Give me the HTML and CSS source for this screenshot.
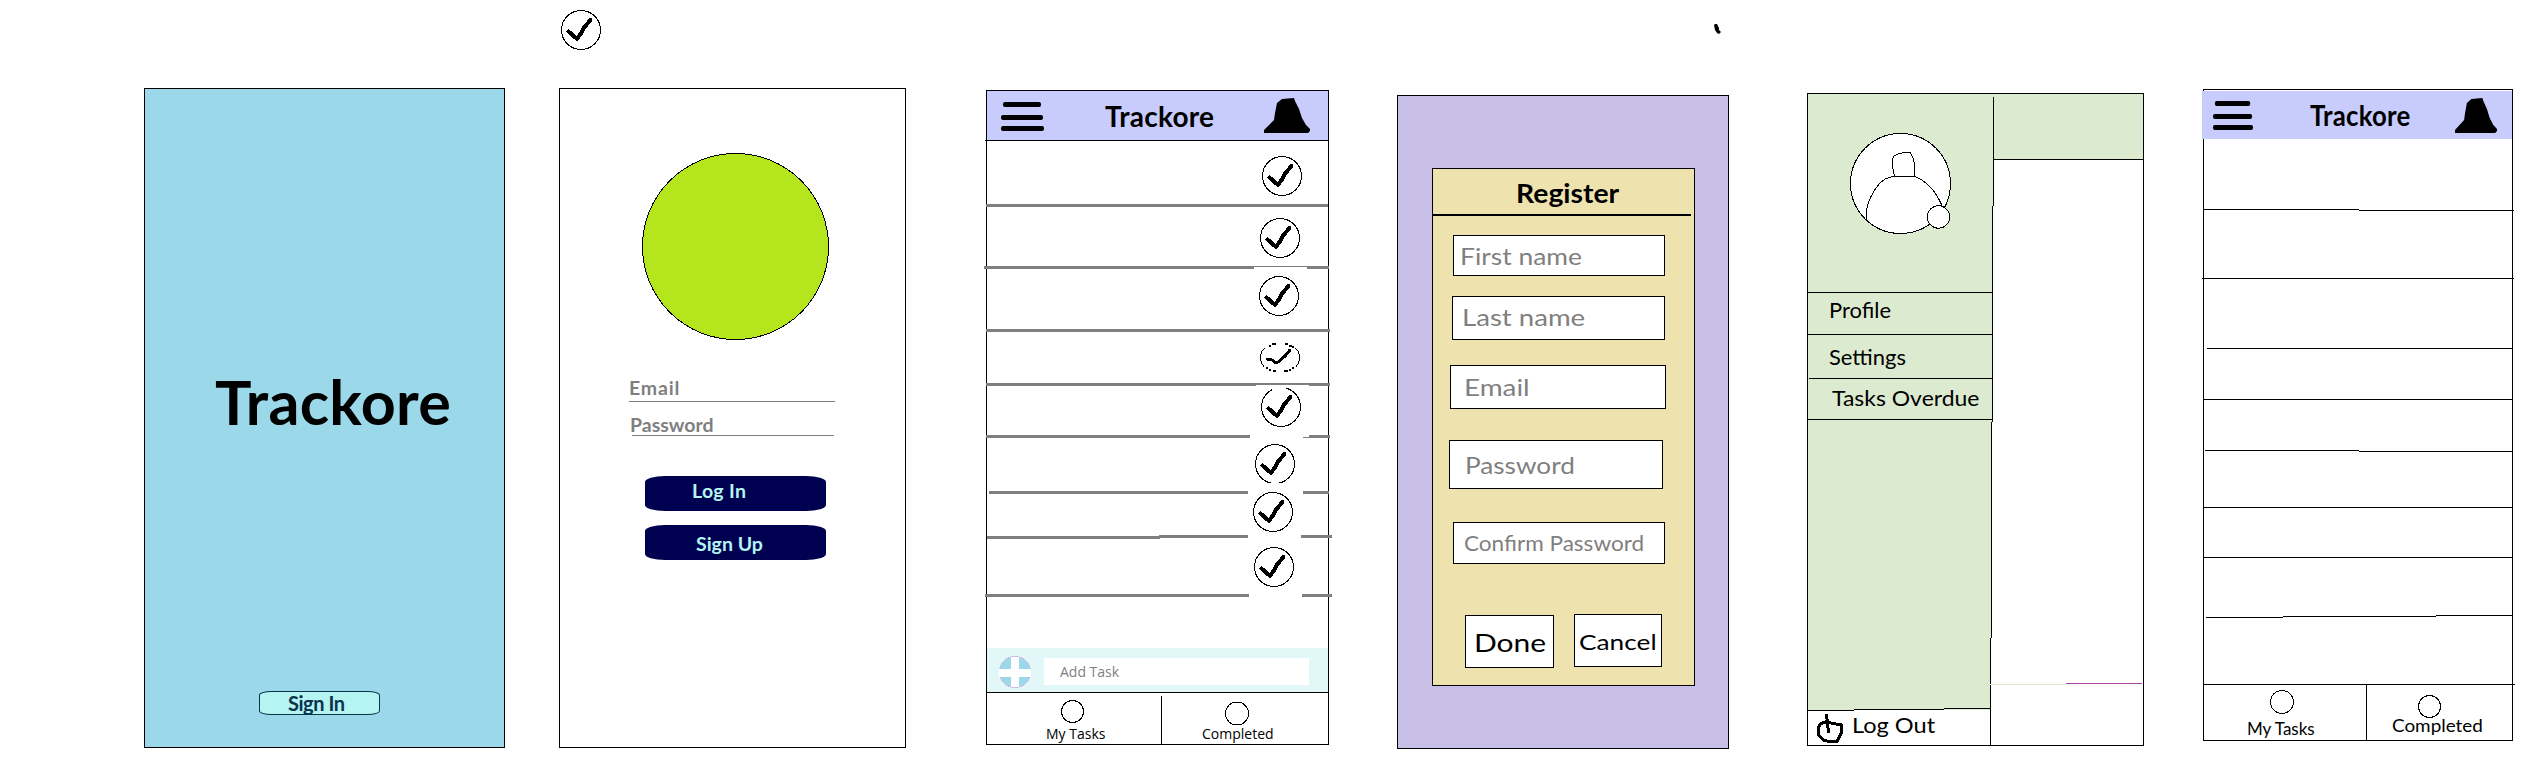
FILE: index.html
```
<!DOCTYPE html>
<html lang="en">
<head>
<meta charset="utf-8">
<title>Trackore wireframes</title>
<link rel="stylesheet" href="styles.css">
</head>
<body>
<svg class="defs" width="0" height="0">
  <symbol id="check" viewBox="0 0 40 40">
    <circle cx="20" cy="20" r="19.5" class="ring"/>
    <path d="M7.5 21.5 L16 29 L20.5 22.5 L22 19 L29.5 10" class="tick"/>
  </symbol>
  <symbol id="menu" viewBox="0 0 43 30" preserveAspectRatio="none">
    <rect x="2" y="0" width="38" height="5" rx="2"/>
    <rect x="0" y="13" width="42" height="5" rx="2"/>
    <rect x="0" y="24" width="43" height="5" rx="2"/>
  </symbol>
  <symbol id="bell" viewBox="0 0 46 35" preserveAspectRatio="none">
    <path d="M0 35 V32 L5 27 L10 22 L11 15 L13 5 L18 1 L30 0 L31 3 L35 11 L38 20 L42 27 L46 31 V33 L44 35 Z"/>
  </symbol>
</svg>
<main class="board">
  <svg class="note-check" width="40" height="40"><use href="#check"/></svg>
  <svg class="note-speck" width="8" height="12" viewBox="0 0 8 12"><path d="M0 1 L1 0 H3 L5 4 V6 L7 8 L5 10 L3 9 L1 6 Z"/></svg>

  <section class="screen splash">
    <h1 class="t splash-title">Trackore</h1>
    <button class="sign-in"><span class="t">Sign In</span></button>
  </section>

  <section class="screen login">
    <svg class="logo" width="187" height="187" viewBox="0 0 187 187"><circle cx="93.5" cy="93.5" r="93"/></svg>
    <div class="line-field email"><span class="t">Email</span></div>
    <div class="line-field password"><span class="t">Password</span></div>
    <button class="pill log-in"><span class="t">Log In</span></button>
    <button class="pill sign-up"><span class="t">Sign Up</span></button>
  </section>

  <section class="screen tasks">
    <header class="bar">
      <svg class="menu" width="43" height="30"><use href="#menu"/></svg>
      <span class="t brand">Trackore</span>
      <svg class="bell" width="46" height="35"><use href="#bell"/></svg>
    </header>
    <div class="row r1"><svg width="40" height="40"><use href="#check"/></svg></div>
    <div class="row r2"><svg width="40" height="40"><use href="#check"/></svg></div>
    <div class="row r3"><svg width="40" height="40"><use href="#check"/></svg></div>
    <div class="row r4"><svg width="40" height="29" viewBox="0 0 40 29"><path class="ring" d="M5 5 L2 8 L0.500 12 V17 L2 21 L4 23.500 M35 5 L38 8 L39.500 12 V17 L38 21 L36 23.500"/><path class="dash" d="M9 3h2 M12 1h4 M25 1h3 M29 2.500h3 M32 4h2 M6 25h2 M9 27h2 M13 28h3 M24 28h4 M29 26.500h2 M32 25h2"/><path d="M7 16 L12 17 L16 20 L19 18.500 L25 13 L30 7" class="tick thin"/></svg></div>
    <div class="row r5"><svg width="40" height="40"><use href="#check"/><rect x="11" y="0" width="14" height="6" class="gap"/></svg></div>
    <div class="row r6"><svg width="40" height="40"><use href="#check"/><rect x="16" y="38" width="8" height="2" class="gap"/></svg></div>
    <div class="row r7"><svg width="40" height="40"><use href="#check"/></svg></div>
    <div class="row r8"><svg width="40" height="40"><use href="#check"/></svg></div>
    <div class="add">
      <svg class="plus" width="32" height="32" viewBox="0 0 32 32"><circle cx="16" cy="16" r="15.5"/><path d="M16 1 V31 M0 17 H32"/></svg>
      <div class="add-input"><span class="t">Add Task</span></div>
    </div>
    <nav class="tabs">
      <div class="tab mine"><svg width="24" height="24"><circle cx="11.5" cy="11.5" r="11" class="ring"/></svg><span class="t">My Tasks</span></div>
      <div class="tab done"><svg width="24" height="24"><circle cx="12" cy="11.5" r="11.5" class="ring"/></svg><span class="t">Completed</span></div>
    </nav>
    <svg class="sketch" width="343" height="655" viewBox="986 90 343 655">
      <path class="thick" d="M986 205.5H1328 M984 267.5H1254 M1307 267.5H1329 M986 330.5H1330 M986 384.5H1256 M1309 384.5H1330 M986 436.5H1250 M1309 436.5H1330 M989 492.5H1248 M1303 492.5H1329 M987 537.5H1160 M1159 536.5H1248 M1301 536.5H1332 M985 595.5H1249 M1302 595.5H1332"/>
      <path class="gray" d="M1254 266.5H1307 M1256 383.5H1309 M1256 384.5H1309 M1303 437.5H1309"/>
      <path class="thin-line" d="M985 140.5H1328 M1161.5 696V744"/>
    </svg>
  </section>

  <section class="screen register">
    <form class="card">
      <h2><span class="t">Register</span></h2>
      <div class="input f1"><span class="t">First name</span></div>
      <div class="input f2"><span class="t">Last name</span></div>
      <div class="input f3"><span class="t">Email</span></div>
      <div class="input f4"><span class="t">Password</span></div>
      <div class="input f5"><span class="t">Confirm Password</span></div>
      <div class="actions">
        <div class="input ok"><span class="t">Done</span></div>
        <div class="input cancel"><span class="t">Cancel</span></div>
      </div>
    </form>
  </section>

  <section class="screen drawer">
    <aside class="side">
      <div class="profile">
        <svg width="101" height="101" viewBox="1850 133 101 101">
          <circle cx="1900.5" cy="183.5" r="50" class="ring"/>
          <path class="ring" d="M1866.5 219 V211 C1868 200 1876 184 1886 178.500 L1893 176.500 H1915 C1929 182 1937 193 1943 208"/>
          <path class="ring" d="M1894.500 176.500 L1892.500 167 V159 L1894 156 Q1899 153 1904 152.500 H1910.500 L1913 158 L1914.500 164 V176.500 Z"/>
          <circle cx="1938.500" cy="217" r="11.200" class="ring"/>
        </svg>
      </div>
      <div class="item i1"><span class="t">Profile</span></div>
      <div class="item i2"><span class="t">Settings</span></div>
      <div class="item i3"><span class="t">Tasks Overdue</span></div>
      <div class="logout">
        <svg width="28" height="30" viewBox="1816 714 28 30"><path d="M1826.500 714 L1828.500 733 M1827 721.500 L1821 723.500 L1818.500 727 V735 L1824 740.500 L1830 741.500 H1837 L1839.500 737 L1841.500 732 V725 L1836 724 L1829 722.500"/></svg>
        <span class="t">Log Out</span>
      </div>
    </aside>
    <div class="content"><div class="content-head"></div></div>
    <svg class="sketch" width="337" height="653" viewBox="1807 93 337 653">
      <path class="green" d="M1990 94h3v112h-3z M1990 206h2v216h-2z M1990 422h1v216h-1z"/>
      <path class="thin-line" d="M1993.500 97V206 M1992.500 206V422 M1991.500 422V638 M1990.500 638V745 M1808 292.500H1992 M1808 334.500H1992 M1809 378.500H1992 M1808 419.500H1992 M1994 159.500H2143 M1807 710.500H1854 M1854 709.500H1944 M1944 708.500H1990"/>
      <path class="faint" d="M1990 684.500H2066"/>
      <path class="violet" d="M2066 683.500H2142"/>
    </svg>
  </section>

  <section class="screen empty">
    <header class="bar">
      <svg class="menu" width="40" height="30"><use href="#menu"/></svg>
      <span class="t brand">Trackore</span>
      <svg class="bell" width="42" height="35"><use href="#bell"/></svg>
    </header>
    <div class="blank"></div>
    <nav class="tabs">
      <div class="tab mine"><svg width="24" height="24"><circle cx="12" cy="12" r="11.500" class="ring"/></svg><span class="t">My Tasks</span></div>
      <div class="tab done"><svg width="24" height="23"><circle cx="11.500" cy="11.500" r="11" class="ring"/></svg><span class="t">Completed</span></div>
    </nav>
    <svg class="sketch" width="310" height="652" viewBox="2203 89 310 652">
      <path class="thin-line" d="M2204 209.500H2359 M2359 210.500H2514 M2202 278.500H2514 M2207 348.500H2512 M2204 399.500H2512 M2205 450.500H2359 M2359 451.500H2512 M2204 507.500H2512 M2204 557.500H2512 M2206 617.500H2283 M2283 616.500H2436 M2436 615.500H2512 M2204 684.500H2515 M2366.500 684V740"/>
    </svg>
  </section>
</main>
</body>
</html>
```
FILE: styles.css
```
* { box-sizing: border-box; }
body { margin: 0; background: #fff; color: #000; font-family: Lato, "Liberation Sans", sans-serif; }
h1, h2 { margin: 0; font-weight: 700; }
button { font: inherit; padding: 0; text-align: left; display: block; }
svg { display: block; flex: none; }
.defs { position: absolute; }
.t { display: block; width: max-content; white-space: nowrap; transform-origin: 0 50%; }

.board { position: relative; display: flex; align-items: flex-start; width: 2528px; height: 780px; overflow: hidden; }
.note-check { position: absolute; left: 561px; top: 10px; }
.note-speck { position: absolute; left: 1714px; top: 24px; }

.screen { position: relative; flex: none; border: 1px solid #000; background: #fff; display: flex; flex-direction: column; align-items: flex-start; }
.sketch { position: absolute; left: -1px; top: -1px; overflow: visible; fill: none; shape-rendering: crispEdges; pointer-events: none; }
.thick { stroke: #7f7f7f; stroke-width: 3; }
.gray { stroke: #7f7f7f; }
.thin-line { stroke: #000; }
.green { fill: #dcead0; }
.faint { stroke: #dcead0; }
.violet { stroke: #a349a4; }
.ring { fill: #fff; stroke: #000; stroke-width: 1; shape-rendering: crispEdges; }
.tick { fill: none; stroke: #000; stroke-width: 4; stroke-linecap: round; stroke-linejoin: round; shape-rendering: crispEdges; }
.tick.thin { stroke-width: 3; }
.dash { fill: none; stroke: #000; stroke-width: 2; shape-rendering: crispEdges; }
.gap { fill: #fff; }

/* Splash */
.splash { width: 361px; height: 660px; margin: 88px 0 0 144px; background: #9bd9ea; }
.splash-title { margin: 276px 0 0 70px; font-size: 61px; line-height: 74px; letter-spacing: 0.3px; }
.sign-in { width: 121px; height: 24px; margin: 252px 0 0 114px; padding-left: 28px; border: 1px solid #0b3350; border-radius: 12px / 4px; background: #b4f4f1; color: #0b3350; font-size: 20px; font-weight: 700; line-height: 22px; letter-spacing: -0.45px; }

/* Login */
.login { width: 347px; height: 660px; margin: 88px 0 0 54px; }
.logo { margin: 64px 0 0 82px; fill: #b5e61d; stroke: #000; shape-rendering: crispEdges; }
.line-field { border-bottom: 1px solid #7f7f7f; color: #7f7f7f; font-size: 19.5px; font-weight: 700; line-height: 27px; }
.email { width: 206px; height: 28px; margin: 34px 0 0 69px; letter-spacing: 0.8px; }
.password { width: 202px; height: 25px; margin: 9px 0 0 72px; text-indent: -2px; }
.pill { width: 181px; height: 35px; border: 0; border-radius: 20px / 6px; background: #000050; color: #b4f4f1; font-size: 19.5px; font-weight: 700; display: flex; align-items: flex-start; }
.log-in { margin: 40px 0 0 85px; padding-left: 47px; line-height: 29px; letter-spacing: 0.3px; }
.sign-up { margin: 14px 0 0 85px; padding-left: 51px; line-height: 37px; }

/* Header bar */
.bar { display: flex; align-items: center; background: #c7ccfc; height: 49px; width: 100%; }
.brand { font-size: 28px; font-weight: 700; line-height: 50px; letter-spacing: 0.25px; }
.bell { margin-left: auto; }
.menu { margin-top: 2px; }

/* Task list */
.tasks { width: 343px; height: 655px; margin: 90px 0 0 80px; }
.tasks .menu { margin-left: 14px; }
.tasks .brand { margin-left: 61px; }
.tasks .bell { margin-right: 18px; }
.row { width: 100%; flex: none; }
.r1 { height: 66px; padding: 15px 0 0 275px; margin-top: 1px; }
.r2 { height: 62px; padding: 11px 0 0 273px; }
.r3 { height: 63px; padding: 7px 0 0 272px; }
.r4 { height: 54px; padding: 11px 0 0 273px; }
.r5 { height: 52px; padding: 1px 0 0 274px; }
.r6 { height: 56px; padding: 6px 0 0 268px; }
.r7 { height: 45px; padding: 0 0 0 266px; }
.r7 svg { margin-top: -2px; }
.r8 { height: 58px; padding: 8px 0 0 267px; }
.add { display: flex; width: 100%; height: 44px; margin-top: 51px; background: #e2f7f8; }
.plus { margin: 8px 0 0 12px; fill: #9bd9ea; stroke: #c8bfe7; shape-rendering: crispEdges; }
.plus path { stroke: #fff; stroke-width: 8; }
.add-input { width: 265px; height: 27px; margin: 10px 0 0 13px; padding-left: 16px; background: #fff; color: #7f7f7f; font: 14px/27px "Open Sans", sans-serif; }
.tabs { display: flex; width: 100%; }
.tasks .tabs { height: 52px; border-top: 1px solid #000; font: 14px "Open Sans", sans-serif; }
.tasks .mine { width: 174px; padding-top: 7px; line-height: 20px; }
.tasks .mine svg { margin-left: 74px; }
.tasks .mine .t { margin-left: 59px; }
.tasks .done { padding-top: 9px; line-height: 16px; }
.tasks .done svg { margin-left: 64px; }
.tasks .done .t { margin-left: 41px; }

/* Register */
.register { width: 332px; height: 654px; margin: 95px 0 0 68px; background: #c7bfe6; }
.card { width: 263px; height: 518px; margin: 72px 0 0 34px; border: 1px solid #000; background: #eee3af; }
.card h2 { width: 258px; height: 47px; padding-left: 83px; border-bottom: 2px solid #000; font-size: 26px; line-height: 48px; }
.card h2 .t { transform: scaleX(1.09); }
.input { border: 1px solid #000; background: #fff; color: #7f7f7f; font-size: 24px; }
.f1 { width: 212px; height: 41px; margin: 19px 0 0 20px; padding-left: 6px; line-height: 39px; }
.f1 .t { transform: scaleX(1.1); }
.f2 { width: 213px; height: 44px; margin: 20px 0 0 19px; padding-left: 9px; line-height: 39px; }
.f2 .t { transform: scaleX(1.15); }
.f3 { width: 216px; height: 44px; margin: 25px 0 0 17px; padding-left: 13px; line-height: 41px; }
.f3 .t { transform: scaleX(1.16); }
.f4 { width: 214px; height: 49px; margin: 31px 0 0 16px; padding-left: 15px; line-height: 47px; }
.f4 .t { transform: scaleX(1.09); }
.f5 { width: 212px; height: 42px; margin: 33px 0 0 20px; padding-left: 10px; font-size: 21px; line-height: 40px; }
.f5 .t { font-size: 20.5px; transform: scaleX(1.1); }
.actions { display: flex; margin-top: 50px; }
.ok { width: 89px; height: 53px; margin: 1px 0 0 32px; padding-left: 8px; color: #000; font-size: 25px; line-height: 53px; }
.ok .t { transform: scaleX(1.2); }
.cancel { width: 88px; height: 53px; margin-left: 20px; padding-left: 4px; color: #000; font-size: 21px; line-height: 54px; }
.cancel .t { transform: scaleX(1.25); }

/* Drawer */
.drawer { width: 337px; height: 653px; margin: 93px 0 0 78px; flex-direction: row; }
.side { width: 183px; height: 651px; background: #dcead0; font-size: 20.5px; display: flex; flex-direction: column; }
.profile { height: 199px; padding: 39px 0 0 42px; }
.item { padding-left: 21px; }
.i1 { height: 42px; line-height: 34px; }
.i1 .t, .i2 .t { transform: scaleX(1.07); }
.i2 { height: 44px; line-height: 44px; }
.i3 { height: 41px; line-height: 38px; padding-left: 24px; }
.i3 .t { transform: scaleX(1.12); }
.logout { display: flex; height: 35px; margin-top: auto; background: #fff; line-height: 30px; }
.logout svg { margin: 4px 0 0 8px; fill: none; stroke: #000; stroke-width: 3; shape-rendering: crispEdges; }
.logout .t { margin-left: 8px; transform: scaleX(1.15); }
.content { flex: 1; }
.content-head { height: 66px; background: #dcead0; }

/* Empty list */
.empty { width: 310px; height: 652px; margin: 89px 0 0 59px; }
.empty .bar { width: 310px; height: 48px; margin: 1px 0 0 -2px; position: relative; flex: none; }
.empty .menu { margin-left: 11px; }
.empty .brand { margin-left: 57px; line-height: 48px; transform: scaleX(0.92); }
.empty .bell { margin-right: 15px; }
.blank { flex: 1; }
.empty .tabs { height: 55px; font-size: 17px; }
.empty .mine { width: 163px; padding-top: 5px; line-height: 30px; }
.empty .mine svg { margin-left: 66px; }
.empty .mine .t { margin-left: 43px; }
.empty .done { padding-top: 10px; line-height: 16px; }
.empty .done svg { margin-left: 51px; }
.empty .done .t { margin-left: 25px; transform: scaleX(1.11); }
```
